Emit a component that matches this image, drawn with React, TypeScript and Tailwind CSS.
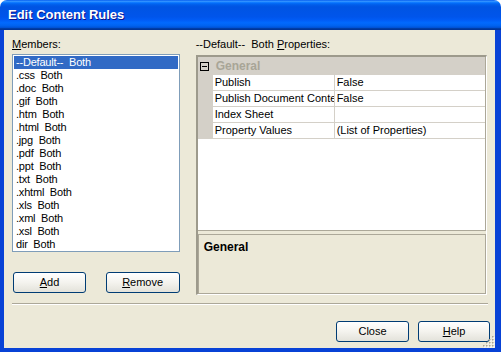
import { ReactNode } from 'react';

const MEMBERS = [
  '--Default--  Both',
  '.css  Both',
  '.doc  Both',
  '.gif  Both',
  '.htm  Both',
  '.html  Both',
  '.jpg  Both',
  '.pdf  Both',
  '.ppt  Both',
  '.txt  Both',
  '.xhtml  Both',
  '.xls  Both',
  '.xml  Both',
  '.xsl  Both',
  'dir  Both',
];

const PROPS: [string, string][] = [
  ['Publish', 'False'],
  ['Publish Document Content', 'False'],
  ['Index Sheet', ''],
  ['Property Values', '(List of Properties)'],
];

function XpButton({ children, className = '' }: { children: ReactNode; className?: string }) {
  return (
    <button
      type="button"
      className={`h-[21px] rounded-[3px] border border-[#003c74] bg-gradient-to-b from-white via-[#f4f3ee] to-[#e3e2da] text-[11px] text-black flex items-center justify-center ${className}`}
    >
      {children}
    </button>
  );
}

function Grip() {
  return (
    <svg width="12" height="12" viewBox="0 0 12 12" className="absolute right-0 bottom-0">
      {[
        [10, 2], [10, 5], [7, 5], [10, 8], [7, 8], [4, 8], [10, 11], [7, 11], [4, 11], [1, 11],
      ].map(([x, y], i) => (
        <g key={i}>
          <rect x={x} y={y - 1} width="1.5" height="1.5" fill="#ffffff" />
          <rect x={x - 1} y={y - 2} width="1.5" height="1.5" fill="#a8a595" />
        </g>
      ))}
    </svg>
  );
}

export default function App() {
  return (
    <div
      className="w-[501px] h-[352px] flex flex-col bg-white select-none"
      style={{ fontFamily: '"Liberation Sans", Arial, sans-serif' }}
    >
      <div
        className="h-[30px] rounded-t-[7px] flex items-center pl-[8px] text-white font-bold text-[13px] shrink-0"
        style={{
          background:
            'linear-gradient(180deg, #0058ee 0%, #3593ff 4%, #288eff 6%, #127dff 8%, #036ffc 10%, #0262ee 14%, #0057e5 20%, #0054e3 24%, #0055eb 56%, #005bf5 66%, #026afe 76%, #0062ef 86%, #0052d6 92%, #0040ab 94%, #003092 100%)',
          textShadow: '1px 1px #0f1089',
        }}
      >
        Edit Content Rules
      </div>

      <div className="flex-1 flex flex-col border-l-[4px] border-r-[6px] border-b-[4px] border-l-[#0842d6] border-r-[#0842d6] border-b-[#0842d6] bg-[#ece9d8] relative text-[11px] text-black">
        <div className="flex pt-[8px] pl-[8px] pr-[8px]">
          <div className="w-[168px] flex flex-col">
            <div className="h-[16px] leading-[12px]">
              <span className="underline">M</span>embers:
            </div>
            <div className="h-[198px] border border-[#7f9db9] bg-white p-[1px] overflow-hidden">
              {MEMBERS.map((m, i) => (
                <div
                  key={m}
                  className={`h-[13px] leading-[13px] pl-[2px] whitespace-pre tracking-[-0.2px] ${i === 0 ? 'bg-[#316ac5] text-white' : ''}`}
                >
                  {m}
                </div>
              ))}
            </div>
            <div className="flex justify-between mt-[20px] pl-[1px]">
              <XpButton className="w-[73px]">
                <span className="underline">A</span>dd
              </XpButton>
              <XpButton className="w-[74px]">
                <span className="underline">R</span>emove
              </XpButton>
            </div>
          </div>

          <div className="ml-[16px] w-[292px] flex flex-col">
            <div className="h-[17px] leading-[12px] whitespace-pre">
              --Default--  Both <span className="underline">P</span>roperties:
            </div>
            <div className="h-[240px] border-l-[2px] border-t-[2px] border-l-[#9d9a8c] border-t-[#9d9a8c] border-r border-b border-r-white border-b-white flex flex-col">
              <div className="h-[174px] bg-white border-r border-b border-[#aca899] flex flex-col">
                <div className="h-[18px] bg-[#d4d0c8] flex items-center shrink-0">
                  <div className="w-[9px] h-[9px] border border-black ml-[2px] flex items-center justify-center">
                    <div className="w-[5px] h-[1px] bg-black" />
                  </div>
                  <span className="ml-[7px] font-bold text-[12px] text-[#a8a597]">General</span>
                </div>
                {PROPS.map(([k, v]) => (
                  <div key={k} className="h-[16px] flex shrink-0">
                    <div className="w-[15px] bg-[#d4d0c8]" />
                    <div className="w-[122px] border-b border-r border-[#d4d0c8] pl-[2px] leading-[15px] whitespace-nowrap overflow-hidden text-clip">
                      {k}
                    </div>
                    <div className="flex-1 border-b border-[#d4d0c8] pl-[2px] leading-[15px] whitespace-nowrap">
                      {v}
                    </div>
                  </div>
                ))}
              </div>
              <div className="mt-[3px] h-[60px] border-[1.5px] border-[#aca899] pl-[5px] pt-[3px]">
                <div className="font-bold text-[12px]">General</div>
              </div>
            </div>
          </div>
        </div>

        <div className="mt-[8px] ml-[8px] mr-[7px] border-t border-t-[#aca899] border-b border-b-white" />

        <div className="flex justify-end gap-[9px] mt-[16px] pr-[5px]">
          <XpButton className="w-[73px]">Close</XpButton>
          <XpButton className="w-[72px]">
            <span className="underline">H</span>elp
          </XpButton>
        </div>
        <Grip />
      </div>
    </div>
  );
}
